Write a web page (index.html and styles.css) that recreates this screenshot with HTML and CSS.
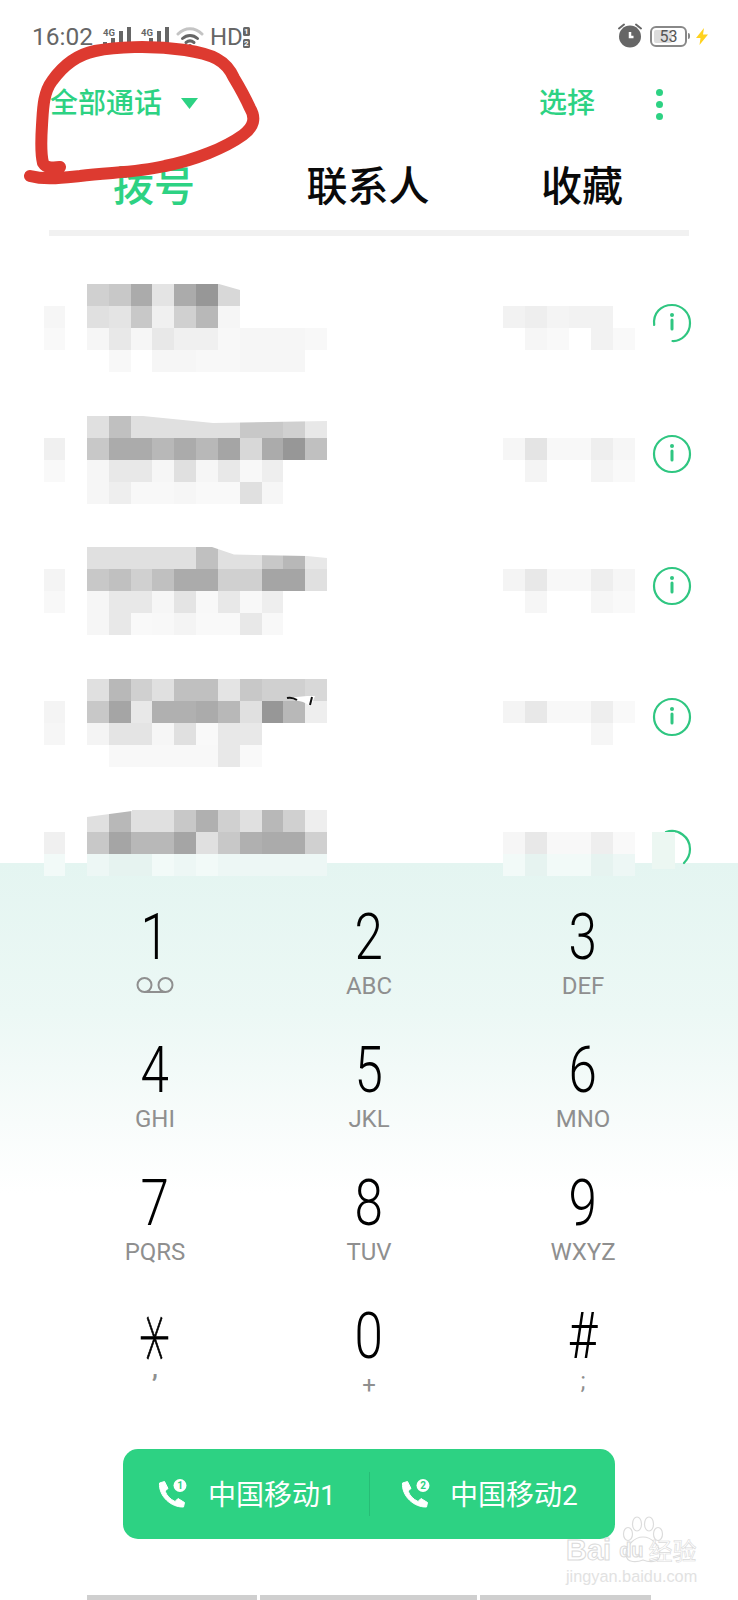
FILE: index.html
```html
<!DOCTYPE html>
<html lang="zh-CN">
<head>
<meta charset="utf-8">
<title>拨号</title>
<link rel="stylesheet" href="styles.css">
</head>
<body>
<div class="screen">
  <header class="status">
    <span class="time">16:02</span>
    <span class="net"><b>4G</b><svg width="30" height="20" viewBox="0 0 30 20"><path class="bars" d="M1 15h4v5H1zM9 11h4v9H9zM17 4h4v16h-4zM25 0h4v20h-4z"/></svg></span>
    <span class="net net2"><b>4G</b><svg width="30" height="20" viewBox="0 0 30 20"><path class="bars" d="M1 15h4v5H1zM9 11h4v9H9zM17 4h4v16h-4zM25 0h4v20h-4z"/></svg></span>
    <svg class="wifi" width="28" height="22" viewBox="0 0 28 22"><path d="M2 8C9 1 19 1 26 8" class="wifi-a"/><path d="M6.500 12.500C11 8.500 17 8.500 21.500 12.500" class="wifi-b"/><path d="M10 16.500C12.500 14.500 15.500 14.500 18 16.500" class="wifi-b"/><circle cx="14" cy="20" r="2" class="wifi-dot"/></svg>
    <span class="hd">HD</span>
    <span class="sims"><i>1</i><i>2</i></span>
    <span class="status-right">
      <svg class="alarm" width="26" height="26" viewBox="0 0 26 26"><path class="bell" d="M2 6.500 7 2.500M24 6.500 19 2.500"/><circle cx="13" cy="14.500" r="11" class="dial"/><path class="hand" d="M13 10v5h3.500"/></svg>
      <span class="battery"><span class="level"></span><span class="pct">53</span></span>
      <svg class="bolt" width="12" height="17" viewBox="0 0 12 17"><path d="M8 0 0 10h4.500L3.500 17 12 6.500H7z"/></svg>
    </span>
  </header>

  <div class="appbar">
    <span class="filter">全部通话</span>
    <svg class="caret" width="17" height="11" viewBox="0 0 17 11"><path d="M0 0h17L8.500 11z"/></svg>
    <span class="select">选择</span>
    <span class="more"><i></i><i></i><i></i></span>
  </div>

  <nav class="tabs">
    <span class="tab active">拨号</span>
    <span class="tab">联系人</span>
    <span class="tab">收藏</span>
  </nav>
  <div class="tabline"></div>

  <section class="list">
    <div class="row">
      <div class="side"><i class="f6"></i><i class="f9"></i></div>
      <div class="mosaic">
        <i class="d0"></i><i class="c8"></i><i class="ab"></i><i class="e4"></i><i class="ab"></i><i class="s9"></i><i class="d8"></i><i></i><i></i><i></i><i></i>
        <i class="e0"></i><i class="e4"></i><i class="c8"></i><i class="f0"></i><i class="d0"></i><i class="b8"></i><i class="f6"></i><i></i><i></i><i></i><i></i>
        <i class="f6"></i><i class="e8"></i><i class="f6"></i><i class="e8"></i><i class="f0"></i><i class="f0"></i><i class="f8"></i><i class="f6"></i><i class="f6"></i><i class="f6"></i><i class="f8"></i>
        <i></i><i class="f8"></i><i></i><i class="f6"></i><i class="f6"></i><i class="f8"></i><i class="f8"></i><i class="f6"></i><i class="f6"></i><i class="f6"></i><i></i>
        <svg class="wedge" width="240" height="88" viewBox="0 0 240 88"><path class="cut" d="M132 0 153 6V0z"/></svg>
      </div>
      <div class="right">
        <i class="f2"></i><i class="ee"></i><i class="f4"></i><i class="f2"></i><i class="f2"></i><i></i>
        <i></i><i class="f6"></i><i class="f9"></i><i></i><i class="f2"></i><i class="f9"></i>
      </div>
      <svg class="info" width="40" height="40" viewBox="0 0 40 40"><path class="ring" d="M2.200 22C.8 10 9 2 20 2c10 0 18 8 18 18 0 11-9 18.500-17.500 18"/><circle class="dot" cx="20" cy="12" r="2"/><path class="stem" d="M20 17v9"/></svg>
    </div>

    <div class="row">
      <div class="side"><i class="f0"></i><i class="f9"></i></div>
      <div class="mosaic">
        <i class="e0"></i><i class="c0"></i><i class="e0"></i><i class="e0"></i><i class="e0"></i><i class="e0"></i><i class="e0"></i><i class="c8"></i><i class="c8"></i><i class="d0"></i><i class="e8"></i>
        <i class="c8"></i><i class="ab"></i><i class="ab"></i><i class="b8"></i><i class="ab"></i><i class="b8"></i><i class="a5"></i><i class="d8"></i><i class="ab"></i><i class="s9"></i><i class="c0"></i>
        <i class="f6"></i><i class="e8"></i><i class="e8"></i><i class="f6"></i><i class="e0"></i><i class="f6"></i><i class="e8"></i><i class="f8"></i><i class="ee"></i><i></i><i></i>
        <i class="f6"></i><i class="ee"></i><i class="f8"></i><i class="f8"></i><i class="f6"></i><i class="f9"></i><i class="f9"></i><i class="e0"></i><i class="f6"></i><i></i><i></i>
        <svg class="wedge" width="240" height="88" viewBox="0 0 240 88"><path class="cut" d="M56 0 126 7 240 5V0z"/></svg>
      </div>
      <div class="right">
        <i class="f6"></i><i class="e4"></i><i class="f8"></i><i class="f8"></i><i class="ee"></i><i class="f6"></i>
        <i></i><i class="f4"></i><i></i><i></i><i class="f4"></i><i class="f9"></i>
      </div>
      <svg class="info" width="40" height="40" viewBox="0 0 40 40"><circle class="ring" cx="20" cy="20" r="18"/><circle class="dot" cx="20" cy="12" r="2"/><path class="stem" d="M20 17v9"/></svg>
    </div>

    <div class="row">
      <div class="side"><i class="f4"></i><i class="f8"></i></div>
      <div class="mosaic">
        <i class="e0"></i><i class="e0"></i><i class="e0"></i><i class="e0"></i><i class="e0"></i><i class="c0"></i><i class="e0"></i><i class="e0"></i><i class="c8"></i><i class="b8"></i><i class="e8"></i>
        <i class="c8"></i><i class="c0"></i><i class="d0"></i><i class="c0"></i><i class="ab"></i><i class="ab"></i><i class="d0"></i><i class="d0"></i><i class="a5"></i><i class="a5"></i><i class="e0"></i>
        <i class="f6"></i><i class="e8"></i><i class="e8"></i><i class="f6"></i><i class="e4"></i><i class="f8"></i><i class="e8"></i><i class="f8"></i><i class="ee"></i><i></i><i></i>
        <i class="f6"></i><i class="e8"></i><i class="f9"></i><i class="f8"></i><i class="f4"></i><i class="f9"></i><i class="f9"></i><i class="e8"></i><i class="f8"></i><i></i><i></i>
        <svg class="wedge" width="240" height="88" viewBox="0 0 240 88"><path class="cut" d="M125 0 147 7.500 220 9 240 11V0z"/></svg>
      </div>
      <div class="right">
        <i class="f4"></i><i class="e8"></i><i class="f8"></i><i class="f8"></i><i class="ee"></i><i class="f6"></i>
        <i></i><i class="f6"></i><i></i><i></i><i class="f6"></i><i class="f9"></i>
      </div>
      <svg class="info" width="40" height="40" viewBox="0 0 40 40"><circle class="ring" cx="20" cy="20" r="18"/><circle class="dot" cx="20" cy="12" r="2"/><path class="stem" d="M20 17v9"/></svg>
    </div>

    <div class="row">
      <div class="side"><i class="f4"></i><i class="f6"></i></div>
      <div class="mosaic">
        <i class="e0"></i><i class="b8"></i><i class="d0"></i><i class="e0"></i><i class="c0"></i><i class="c0"></i><i class="e4"></i><i class="c8"></i><i class="d0"></i><i class="d0"></i><i class="d8"></i>
        <i class="c8"></i><i class="a5"></i><i class="e8"></i><i class="b0"></i><i class="b0"></i><i class="ab"></i><i class="b8"></i><i class="e0"></i><i class="s9"></i><i class="b8"></i><i class="ee"></i>
        <i class="f4"></i><i class="e4"></i><i class="e4"></i><i class="f6"></i><i class="e0"></i><i class="f9"></i><i class="e8"></i><i class="e8"></i><i></i><i></i><i></i>
        <i></i><i class="f8"></i><i class="f8"></i><i class="f8"></i><i class="f8"></i><i class="f8"></i><i class="e8"></i><i class="f9"></i><i></i><i></i><i></i>
        <svg class="wedge" width="240" height="88" viewBox="0 0 240 88"><path class="cut" d="M200 19 220 17 228 17 224 27 216 23z"/><path class="tick" d="M200 19C204 18 207 19 210 21M225 18 223 26"/></svg>
      </div>
      <div class="right">
        <i class="f4"></i><i class="e8"></i><i class="f8"></i><i class="f8"></i><i class="ee"></i><i class="f9"></i>
        <i></i><i></i><i></i><i></i><i class="f6"></i><i></i>
      </div>
      <svg class="info" width="40" height="40" viewBox="0 0 40 40"><circle class="ring" cx="20" cy="20" r="18"/><circle class="dot" cx="20" cy="12" r="2"/><path class="stem" d="M20 17v9"/></svg>
    </div>

    <div class="row">
      <div class="side"><i class="f0"></i><i class="t2"></i></div>
      <div class="mosaic">
        <i class="e0"></i><i class="b8"></i><i class="e0"></i><i class="e0"></i><i class="c8"></i><i class="b0"></i><i class="d0"></i><i class="e0"></i><i class="b8"></i><i class="d0"></i><i class="ee"></i>
        <i class="c8"></i><i class="a5"></i><i class="b8"></i><i class="b8"></i><i class="a5"></i><i class="e0"></i><i class="c8"></i><i class="b0"></i><i class="ab"></i><i class="ab"></i><i class="d0"></i>
        <i class="t1"></i><i class="t3"></i><i class="t3"></i><i class="t2"></i><i class="t1"></i><i class="t2"></i><i class="t1"></i><i class="t1"></i><i class="t1"></i><i class="t1"></i><i class="t1"></i>
        <svg class="wedge" width="240" height="88" viewBox="0 0 240 88"><path class="cut" d="M0 0V7L45 1V0z"/></svg>
      </div>
      <div class="right">
        <i class="f6"></i><i class="e8"></i><i class="f8"></i><i class="f8"></i><i class="ee"></i><i class="f9"></i>
        <i class="t2"></i><i class="t3"></i><i class="t2"></i><i class="t2"></i><i class="t3"></i><i class="t1"></i>
      </div>
      <svg class="info" width="40" height="40" viewBox="0 0 40 40"><path class="ring" d="M14 3C26 -1 38 8 38 20c0 6-2 10-6 14"/><path class="patch" d="M0 3h23v37H0z"/></svg>
    </div>
  </section>

  <section class="dialer">
    <div class="keys">
      <div class="key"><span class="digit">1</span><svg class="vm" width="38" height="17" viewBox="0 0 38 17"><circle cx="8.500" cy="8" r="7"/><circle cx="29.500" cy="8" r="7"/><path d="M8.500 15h21"/></svg></div>
      <div class="key"><span class="digit">2</span><span class="sub">ABC</span></div>
      <div class="key"><span class="digit">3</span><span class="sub">DEF</span></div>
      <div class="key"><span class="digit">4</span><span class="sub">GHI</span></div>
      <div class="key"><span class="digit">5</span><span class="sub">JKL</span></div>
      <div class="key"><span class="digit">6</span><span class="sub">MNO</span></div>
      <div class="key"><span class="digit">7</span><span class="sub">PQRS</span></div>
      <div class="key"><span class="digit">8</span><span class="sub">TUV</span></div>
      <div class="key"><span class="digit">9</span><span class="sub">WXYZ</span></div>
      <div class="key"><span class="digit star">*</span><span class="sub raised">,</span></div>
      <div class="key"><span class="digit">0</span><span class="sub">+</span></div>
      <div class="key"><span class="digit">#</span><span class="sub semi">;</span></div>
    </div>

    <div class="callbar">
      <div class="sim">
        <svg width="30" height="30" viewBox="0 0 30 30"><path class="handset" d="M2.500 4 7.500 2.500 11 9.500 8 12C10 17 13 20 18 22.500L21 19.500 27.500 23.500 26.500 28C14 28.500 1.500 17 2.500 4Z"/><circle class="badge" cx="23" cy="6.500" r="6.500"/><text class="badge-no" x="23" y="10">1</text></svg>
        <span class="carrier">中国移动1</span>
      </div>
      <div class="sim">
        <svg width="30" height="30" viewBox="0 0 30 30"><path class="handset" d="M2.500 4 7.500 2.500 11 9.500 8 12C10 17 13 20 18 22.500L21 19.500 27.500 23.500 26.500 28C14 28.500 1.500 17 2.500 4Z"/><circle class="badge" cx="23" cy="6.500" r="6.500"/><text class="badge-no" x="23" y="10">2</text></svg>
        <span class="carrier">中国移动2</span>
      </div>
    </div>

    <div class="navbar"><i class="n1"></i><i class="n2"></i><i class="n3"></i></div>
  </section>

  <svg class="scribble" width="270" height="195" viewBox="0 0 270 195"><path d="M30 176C45 180 60 178 80 176C110 172 135 173 165 166C195 160 225 148 243 135C254 127 256 118 250 108C245 97 240 88 234 78C226 60 212 54 185 50C150 45 115 47 95 51C75 55 62 67 52 81C43 93 43 110 42 125C41 140 41 155 43 163C46 168 52 168 60 167"/></svg>

  <div class="watermark">
    <svg class="paw" width="48" height="50" viewBox="0 0 48 50"><ellipse cx="8" cy="18" rx="4.500" ry="6.500"/><ellipse cx="17" cy="8" rx="4.500" ry="7"/><ellipse cx="29" cy="8" rx="4.500" ry="7"/><ellipse cx="38" cy="18" rx="4.500" ry="6.500"/><path d="M23 21C32 21 40 30 40 38C40 48 28 46 23 44C18 46 6 48 6 38C6 30 14 21 23 21Z"/></svg>
    <div class="wm-main"><span>Bai</span><span class="wm-du">du</span><span class="wm-cn">经验</span></div>
    <div class="wm-url">jingyan.baidu.com</div>
  </div>
</div>
</body>
</html>
```
FILE: styles.css
```css
* { box-sizing: border-box; }
html, body { margin: 0; padding: 0; background: #fff; }
body { font-family: Roboto, "Noto Sans CJK SC", sans-serif; }
.screen { position: relative; width: 738px; height: 1600px; overflow: hidden; background: #fff; }

/* status bar */
.status { display: flex; align-items: center; height: 74px; padding: 0 0 0 32px; color: #666; }
.time { font-size: 24.500px; width: 70px; line-height: 26px; }
.net { position: relative; display: block; width: 30px; height: 20px; margin-bottom: 1px; }
.net2 { margin-left: 8px; }
.net b { position: absolute; left: 1px; top: 1px; font-size: 9.500px; line-height: 10px; font-weight: 700; color: #666; }
.net svg { display: block; }
.bars { fill: #666; }
.wifi { margin-left: 6px; fill: none; }
.wifi-a { stroke: #c4c4c4; stroke-width: 3; fill: none; stroke-linecap: round; }
.wifi-b { stroke: #666; stroke-width: 3; fill: none; stroke-linecap: round; }
.wifi-dot { fill: #666; }
.hd { margin-left: 6px; font-size: 24px; line-height: 26px; color: #666; }
.sims { display: flex; flex-direction: column; gap: 3px; margin-left: 0; }
.sims i { display: block; width: 7px; height: 9px; border-radius: 1.500px; background: #666; color: #fff; font: 700 8px/9px Roboto, sans-serif; text-align: center; }
.status-right { display: flex; align-items: center; margin-left: auto; padding-right: 30px; margin-bottom: 2px; }
.alarm { display: block; margin-bottom: 2px; }
.bell { stroke: #666; stroke-width: 2; fill: none; stroke-linecap: round; }
.dial { fill: #666; }
.hand { stroke: #fff; stroke-width: 2.500; fill: none; }
.battery { position: relative; display: block; width: 37px; height: 21px; margin-left: 7px; border: 2px solid #888; border-radius: 6px; }
.battery::after { content: ""; position: absolute; right: -5px; top: 5px; width: 2px; height: 6px; border-radius: 0 2px 2px 0; background: #888; }
.level { position: absolute; left: 2px; top: 2px; bottom: 2px; width: 18px; border-radius: 2px; background: #dcdcdc; }
.pct { position: absolute; left: 0; right: 0; top: 0; text-align: center; font-size: 16px; line-height: 17px; color: #555; }
.bolt { margin-left: 9px; fill: #ffd21f; }

/* app bar */
.appbar { display: flex; align-items: center; height: 60px; padding-left: 50px; color: #2dd283; }
.filter { font-size: 28px; line-height: 40px; font-weight: 500; }
.caret { margin-left: 19px; margin-top: -1px; fill: #2dd283; }
.select { margin-left: 341px; font-size: 28px; line-height: 40px; font-weight: 500; }
.more { display: flex; flex-direction: column; gap: 5px; margin-left: 61px; }
.more i { display: block; width: 7px; height: 7px; border-radius: 50%; background: #2dd283; }

/* tabs */
.tabs { display: grid; grid-template-columns: repeat(3, 214px); height: 96px; padding: 10px 0 0 47px; align-items: center; }
.tab { text-align: center; font-size: 41px; line-height: 52px; font-weight: 500; color: #0a0a0a; }
.tab.active { color: #2dd283; }
.tabline { height: 6px; margin: 0 49px; background: #f1f1f1; }

/* call list */
.list { position: relative; z-index: 1; height: 627px; padding-top: 48px; }
.row { display: flex; align-items: flex-start; height: 131.500px; padding-left: 44px; }
.row i { display: block; }
.side { display: grid; grid-template-rows: repeat(2, 22px); width: 21px; margin-top: 22px; }
.mosaic { position: relative; display: grid; grid-template-columns: repeat(11, 21.820px); grid-auto-rows: 22px; margin-left: 22px; }
.wedge { position: absolute; left: 0; top: 0; }
.cut { fill: #fff; }
.tick { fill: none; stroke: #111; stroke-width: 2; }
.right { display: grid; grid-template-columns: repeat(6, 22px); grid-auto-rows: 22px; margin-left: 176px; margin-top: 22px; width: 132px; }
.info { flex: none; margin-left: 17px; margin-top: 18.500px; }
.ring { fill: none; stroke: #2fc681; stroke-width: 2.200; stroke-linecap: round; }
.dot { fill: #2fc681; }
.stem { stroke: #2fc681; stroke-width: 3; stroke-linecap: round; fill: none; }
.patch { fill: #ecf7f2; }
.f9 { background: #f9f9f9; } .f8 { background: #f8f8f8; } .f6 { background: #f6f6f6; }
.f4 { background: #f4f4f4; } .f2 { background: #f2f2f2; } .f0 { background: #f0f0f0; }
.ee { background: #eeeeee; } .e8 { background: #e8e8e8; } .e4 { background: #e4e4e4; }
.e0 { background: #e0e0e0; } .d8 { background: #d8d8d8; } .d0 { background: #d0d0d0; }
.c8 { background: #c8c8c8; } .c0 { background: #c0c0c0; } .b8 { background: #b8b8b8; }
.b0 { background: #b0b0b0; } .ab { background: #ababab; } .a5 { background: #a5a5a5; }
.s9 { background: #979797; }
.t1 { background: #edf7f5; } .t2 { background: #f2faf8; } .t3 { background: #e6f3f0; }

/* dialer */
.dialer { height: 737px; padding-top: 47px; background: linear-gradient(#e4f5f1 0, #ecf8f5 150px, #f8fcfb 260px, #ffffff 330px); }
.keys { display: grid; grid-template-columns: repeat(3, 214px); grid-auto-rows: 133px; padding-left: 48px; }
.key { display: flex; flex-direction: column; align-items: center; }
.digit { display: block; height: 56px; font-size: 64px; line-height: 56px; font-weight: 300; color: #000; transform: scaleX(0.8); }
.star { font-family: "DejaVu Sans", sans-serif; font-weight: 200; font-size: 92px; line-height: 92px; height: 56px; -webkit-text-stroke: 0.8px #000; transform: scale(0.64, 1.08) rotate(90deg); transform-origin: 50% 29px; }
.sub { display: block; height: 40px; font-size: 24px; line-height: 40px; color: #8f8f8f; }
.raised { margin-top: -16px; font-weight: 700; }
.semi { margin-top: -4px; }
.vm { display: block; margin-top: 11px; fill: none; stroke: #8f8f8f; stroke-width: 2; }

.callbar { display: flex; width: 492px; height: 90px; margin: 7px 0 0 123px; border-radius: 15px; background: #2dd283; color: #fff; }
.sim { position: relative; display: flex; align-items: center; flex: none; width: 246px; padding-left: 34px; gap: 21px; font-size: 28px; line-height: 34px; }
.sim + .sim { padding-left: 31px; gap: 20px; }
.sim + .sim::before { content: ""; position: absolute; left: 0; top: 23px; bottom: 23px; width: 1px; background: #27bd76; }
.sim svg { flex: none; }
.carrier { margin-top: 3px; }
.handset { fill: #fff; stroke: #fff; stroke-width: 1; stroke-linejoin: round; }
.badge { fill: #fff; }
.badge-no { fill: #2dd283; font: 700 10px Roboto, sans-serif; text-anchor: middle; }

.navbar { display: flex; gap: 3px; height: 5px; margin-top: 56px; padding-left: 87px; }
.navbar i { display: block; height: 5px; background: #cfcfcf; }
.n1 { width: 170px; } .n2 { width: 217px; } .n3 { width: 171px; }

/* overlays */
.scribble { position: absolute; left: 0; top: 0; z-index: 5; fill: none; stroke: #dd3a30; stroke-width: 12; stroke-linecap: round; stroke-linejoin: round; }
.watermark { position: absolute; left: 566px; top: 1516px; z-index: 6; width: 135px; }
.paw { position: absolute; left: 54px; top: 0; fill: none; stroke: #dcdcdc; stroke-width: 1.200; }
.wm-main { position: relative; display: flex; align-items: center; margin-top: 20px; font: 700 29px/28px "Liberation Sans", sans-serif; color: #fff; -webkit-text-stroke: 1px #dadada; }
.wm-du { font-size: 20px; margin-left: 8px; }
.wm-cn { margin-left: 5px; font: 400 24px/28px "Noto Sans CJK SC", sans-serif; -webkit-text-stroke: 0.6px #dadada; letter-spacing: 0; white-space: nowrap; }
.wm-url { margin-top: 2px; font: 400 16.300px/20px "Liberation Sans", sans-serif; color: #e2e2e2; white-space: nowrap; }
```
